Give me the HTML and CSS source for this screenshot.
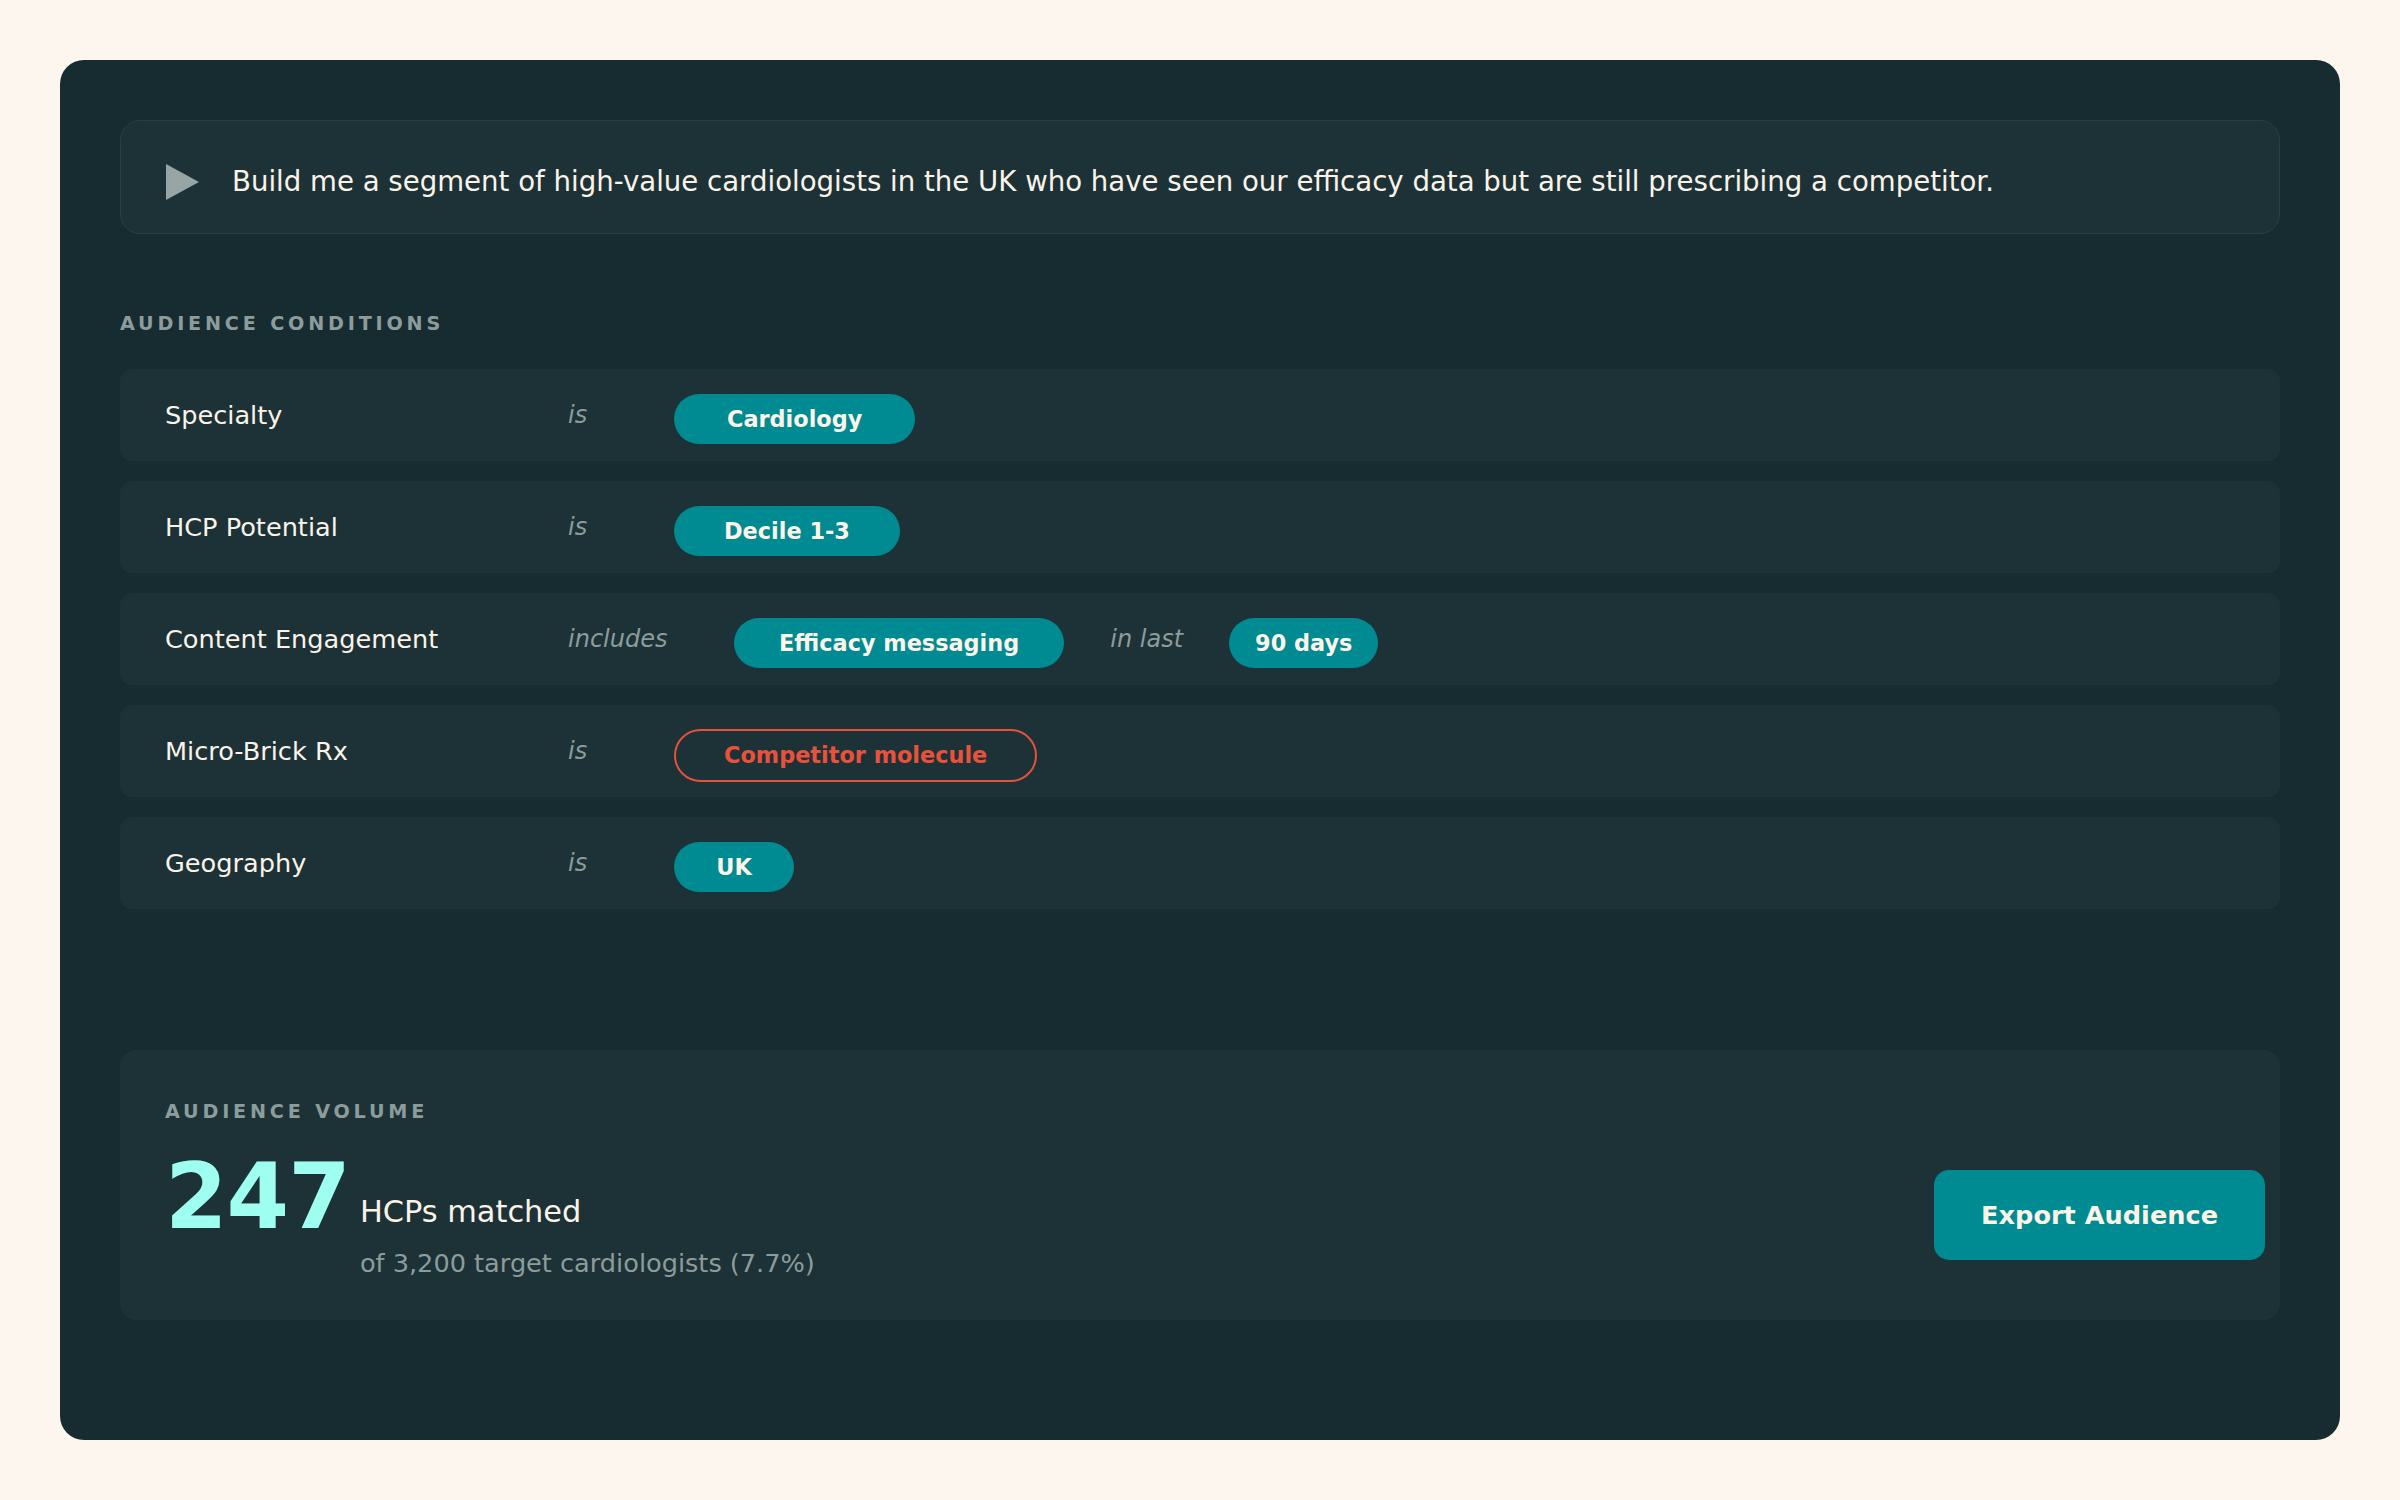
FILE: index.html
```html
<!DOCTYPE html>
<html>
<head>
  <title>Audience Builder</title>
  <link rel="stylesheet" href="styles.css">
</head>
<body>

  <div class="card">

    <div class="prompt">
      <svg class="prompt-icon" width="33" height="36" viewBox="0 0 33 36">
        <polygon points="0,0 33,18 0,36" fill="#97a6a5" />
      </svg>
      <span class="prompt-text">Build me a segment of high-value cardiologists in the UK who have seen our efficacy data but are still prescribing a competitor.</span>
    </div>

    <div class="section-label conditions-label">Audience Conditions</div>

    <div class="conditions">
      <div class="cond-row">
        <span class="cond-label">Specialty</span>
        <span class="cond-op">is</span>
        <span class="pill pill-lg">Cardiology</span>
      </div>
      <div class="cond-row">
        <span class="cond-label">HCP Potential</span>
        <span class="cond-op">is</span>
        <span class="pill">Decile 1-3</span>
      </div>
      <div class="cond-row">
        <span class="cond-label">Content Engagement</span>
        <span class="cond-op cond-op-wide">includes</span>
        <span class="pill pill-md">Efficacy messaging</span>
        <span class="cond-op">in last</span>
        <span class="pill pill-sm">90 days</span>
      </div>
      <div class="cond-row">
        <span class="cond-label">Micro-Brick Rx</span>
        <span class="cond-op">is</span>
        <span class="pill pill-outline">Competitor molecule</span>
      </div>
      <div class="cond-row">
        <span class="cond-label">Geography</span>
        <span class="cond-op">is</span>
        <span class="pill pill-sm">UK</span>
      </div>
    </div>

    <div class="volume">
      <div class="section-label volume-label">Audience Volume</div>
      <div class="volume-row">
        <div class="volume-count">
          <span class="big-num">247</span>
          <div class="volume-text">
            <div class="matched">HCPs matched</div>
            <div class="of-total">of 3,200 target cardiologists (7.7%)</div>
          </div>
        </div>
        <button class="export-btn">Export Audience</button>
      </div>
    </div>

  </div>

</body>
</html>
```

FILE: styles.css
```css
body {
  margin: 0;
  padding: 60px;
  background: #fdf6ef;
  font-family: "DejaVu Sans", Verdana, sans-serif;
  color: #fbf3e8;
}

.card {
  box-sizing: border-box;
  height: 1380px;
  padding: 60px;
  background: #172c31;
  border-radius: 24px;
}

/* prompt */

.prompt {
  display: flex;
  align-items: center;
  gap: 33px;
  padding: 41px 45px 31px 45px;
  background: #1c3237;
  border: 1px solid #283f44;
  border-radius: 20px;
}

.prompt-icon {
  flex: none;
}

.prompt-text {
  font-size: 27.6px;
  line-height: 40px;
}

/* section labels */

.section-label {
  font-size: 19.2px;
  line-height: 23px;
  font-weight: bold;
  letter-spacing: 3.8px;
  text-transform: uppercase;
  color: #8c9c9b;
}

.conditions-label {
  margin: 78px 0 34px;
}

/* condition rows */

.conditions {
  display: flex;
  flex-direction: column;
  gap: 20px;
}

.cond-row {
  display: flex;
  align-items: center;
  height: 92px;
  padding: 0 45px;
  background: #1c3237;
  border-radius: 12px;
}

.cond-label {
  flex: none;
  width: 403px;
  font-size: 25.6px;
}

.cond-op {
  min-width: 60px;
  margin-right: 46px;
  font-size: 24px;
  font-style: italic;
  color: #8c9c9b;
}

.cond-op-wide {
  min-width: 120px;
}

.pill + .cond-op {
  margin-left: 46px;
}

.pill {
  box-sizing: border-box;
  height: 50px;
  margin-top: 8px;
  padding: 0 50px;
  line-height: 50px;
  font-size: 22.4px;
  font-weight: bold;
  text-align: center;
  color: #fdf5ea;
  background: #008a91;
  border-radius: 25px;
}

.pill-lg {
  padding: 0 53px;
}

.pill-md {
  padding: 0 45px;
}

.pill-sm {
  min-width: 120px;
  padding: 0 26px;
}

.pill-outline {
  height: 53px;
  line-height: 49px;
  margin-top: 9px;
  padding: 0 48px;
  background: transparent;
  border: 2px solid #e4513c;
  color: #e8523c;
  border-radius: 27px;
}

/* volume */

.volume {
  margin-top: 141px;
  padding: 50px 15px 39px 45px;
  background: #1c3237;
  border-radius: 16px;
}

.volume-label {
  margin-bottom: 29px;
}

.volume-row {
  display: flex;
  align-items: center;
  justify-content: space-between;
}

.volume-count {
  display: flex;
  align-items: flex-start;
  gap: 10px;
}

.big-num {
  font-size: 90px;
  line-height: 90px;
  font-weight: bold;
  letter-spacing: -1px;
  color: #9efff0;
}

.volume-text {
  padding-top: 42px;
}

.matched {
  font-size: 30.4px;
  line-height: 36px;
}

.of-total {
  margin-top: 16px;
  font-size: 25.6px;
  line-height: 35px;
  color: #8c9c9b;
}

.export-btn {
  margin-bottom: 3px;
  padding: 30px 47px;
  font-family: inherit;
  font-size: 25.6px;
  line-height: 30px;
  font-weight: bold;
  color: #fdf3e7;
  background: #008a91;
  border: none;
  border-radius: 15px;
  cursor: pointer;
}

.export-btn:hover {
  background: #007a80;
}
```
